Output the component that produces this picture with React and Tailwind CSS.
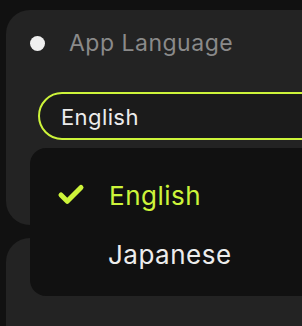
import { Check } from 'lucide-react';

const font = { fontFamily: 'Inter, "Noto Sans", sans-serif' };

export default function App() {
    return (
        <div className="w-[302px] h-[326px] overflow-hidden bg-[#111111] pl-[6px] pt-[10px]" style={font}>
            {/* Language card */}
            <div className="relative w-[330px] h-[215px] rounded-[24px] bg-[#232323]">
                <div className="flex items-center pl-[24px] h-[66px]">
                    <span className="w-[15px] h-[15px] rounded-full bg-[#efefef]" />
                    <span className="ml-[24px] text-[23px] tracking-[0.5px] text-[#8a8a8a]">App Language</span>
                </div>

                <div className="ml-[32px] mt-[16px] h-[48px] w-[320px] rounded-full border-2 border-[#cdf43a] bg-[#1b1b1b] flex items-center pl-[21px] pt-[2px]">
                    <span className="text-[22px] tracking-[0.4px] text-[#ececec]">English</span>
                </div>

                {/* Open dropdown */}
                <div className="absolute left-[24px] top-[138px] z-10 w-[320px] h-[148px] rounded-[16px] bg-[#111111] flex flex-col pt-[18px]">
                    <div className="flex items-center h-[58px]">
                        <Check className="ml-[26px] w-[30px] h-[30px] text-[#cdf43a]" strokeWidth={4} />
                        <span className="ml-[23px] text-[26px] tracking-[0.5px] text-[#cdf43a]">English</span>
                    </div>
                    <div className="flex items-center h-[58px] pl-[78px] pt-[2px]">
                        <span className="text-[26px] tracking-[0.5px] text-[#ededed]">Japanese</span>
                    </div>
                </div>
            </div>

            {/* Next card */}
            <div className="mt-[13px] w-[330px] h-[200px] rounded-[24px] bg-[#232323]" />
        </div>
    );
}
